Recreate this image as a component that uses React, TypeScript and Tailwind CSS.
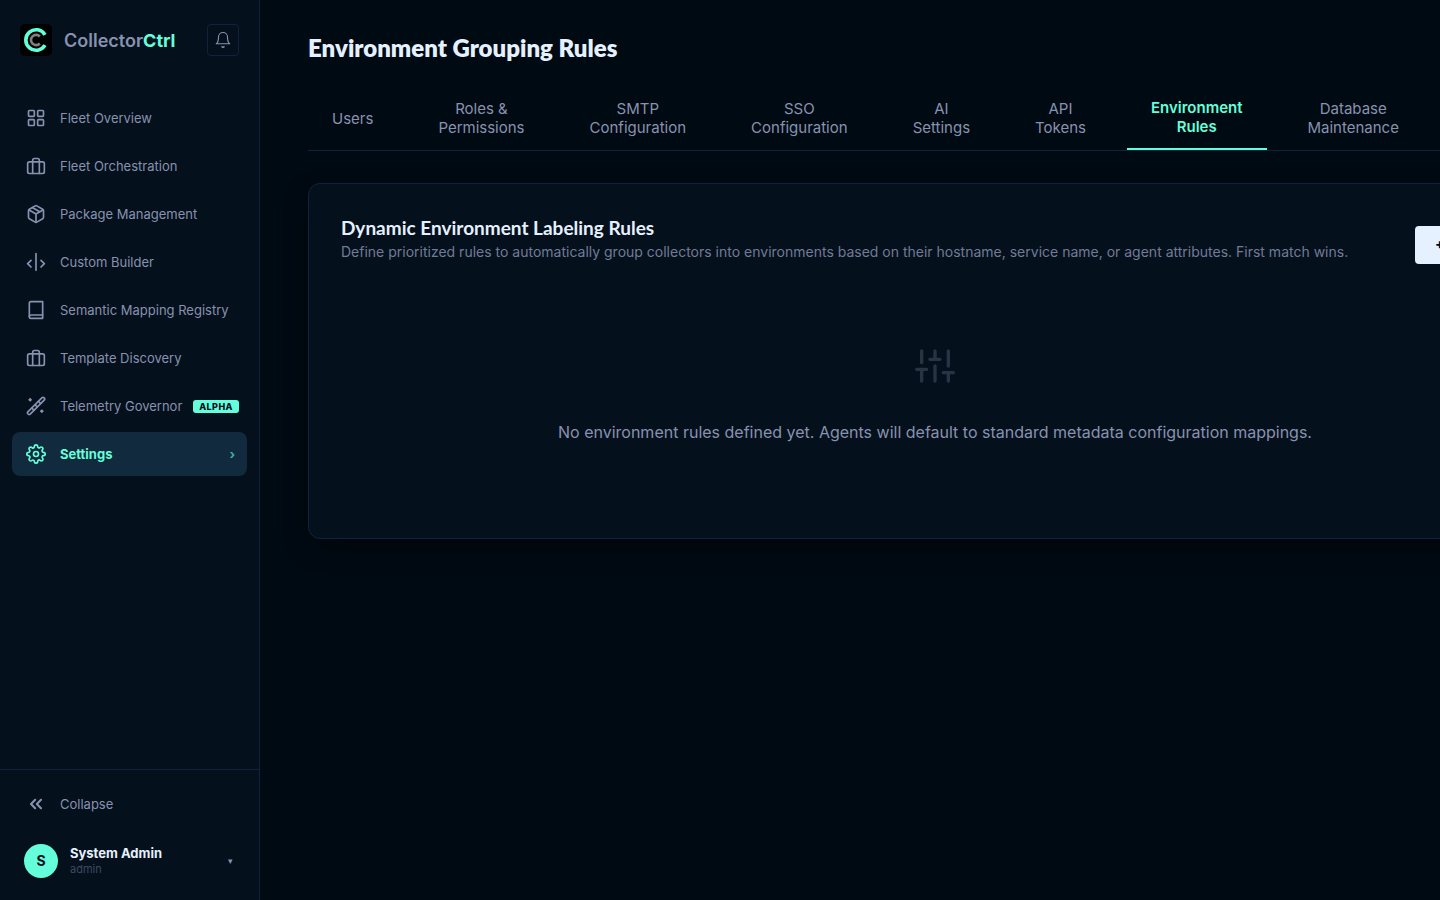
import { FC, ReactNode } from 'react';

interface NavItem {
  label: string;
  icon: ReactNode;
  badge?: string;
  active?: boolean;
}

interface IconProps {
  children: ReactNode;
  className?: string;
  strokeWidth?: number;
}

const Icon: FC<IconProps> = ({ children, className = 'w-5 h-5', strokeWidth = 2 }) => (
  <svg
    viewBox="0 0 24 24"
    fill="none"
    stroke="currentColor"
    strokeWidth={strokeWidth}
    strokeLinecap="round"
    strokeLinejoin="round"
    className={`shrink-0 ${className}`}
    aria-hidden="true"
  >
    {children}
  </svg>
);

const briefcase = (
  <Icon>
    <rect x="2" y="7" width="20" height="14" rx="2" />
    <path d="M16 21V5a2 2 0 0 0-2-2h-4a2 2 0 0 0-2 2v16" />
  </Icon>
);

const navItems: NavItem[] = [
  {
    label: 'Fleet Overview',
    icon: (
      <Icon>
        <rect x="3" y="3" width="7" height="7" rx="1" />
        <rect x="14" y="3" width="7" height="7" rx="1" />
        <rect x="3" y="14" width="7" height="7" rx="1" />
        <rect x="14" y="14" width="7" height="7" rx="1" />
      </Icon>
    ),
  },
  { label: 'Fleet Orchestration', icon: briefcase },
  {
    label: 'Package Management',
    icon: (
      <Icon>
        <path d="M16.5 9.4l-9-5.19" />
        <path d="M21 16V8a2 2 0 0 0-1-1.73l-7-4a2 2 0 0 0-2 0l-7 4A2 2 0 0 0 3 8v8a2 2 0 0 0 1 1.73l7 4a2 2 0 0 0 2 0l7-4A2 2 0 0 0 21 16z" />
        <path d="M3.27 6.96L12 12.01l8.73-5.05M12 22.08V12" />
      </Icon>
    ),
  },
  {
    label: 'Custom Builder',
    icon: (
      <Icon>
        <path d="M12 2v20M18 10l4 4-4 4M6 10l-4 4 4 4" />
      </Icon>
    ),
  },
  {
    label: 'Semantic Mapping Registry',
    icon: (
      <Icon>
        <path d="M4 19.5A2.5 2.5 0 0 1 6.5 18H20" />
        <path d="M6 2h14v20H6a2 2 0 0 1-2-2V4a2 2 0 0 1 2-2z" />
      </Icon>
    ),
  },
  { label: 'Template Discovery', icon: briefcase },
  {
    label: 'Telemetry Governor',
    badge: 'ALPHA',
    icon: (
      <Icon>
        <path d="M21.8 2.2a2 2 0 0 0-2.8 0L2.2 19a2 2 0 0 0 2.8 2.8L21.8 5a2 2 0 0 0 0-2.8z" />
        <path d="M15 6.5L17.5 9M11 10.5l2.5 2.5M7 14.5L9.5 17" />
        <path d="M5 3.8v1.6M4.2 4.6h1.6M19 17.4V19M18.2 18.2h1.6" strokeWidth="2.6" />
      </Icon>
    ),
  },
  {
    label: 'Settings',
    active: true,
    icon: (
      <Icon>
        <circle cx="12" cy="12" r="3" />
        <path d="M19.4 15a1.65 1.65 0 0 0 .33 1.82l.06.06a2 2 0 0 1 0 2.83 2 2 0 0 1-2.83 0l-.06-.06a1.65 1.65 0 0 0-1.82-.33 1.65 1.65 0 0 0-1 1.51V21a2 2 0 0 1-2 2 2 2 0 0 1-2-2v-.09A1.65 1.65 0 0 0 9 19.4a1.65 1.65 0 0 0-1.82.33l-.06.06a2 2 0 0 1-2.83 0 2 2 0 0 1 0-2.83l.06-.06a1.65 1.65 0 0 0 .33-1.82 1.65 1.65 0 0 0-1.51-1H3a2 2 0 0 1-2-2 2 2 0 0 1 2-2h.09A1.65 1.65 0 0 0 4.6 9a1.65 1.65 0 0 0-.33-1.82l-.06-.06a2 2 0 0 1 0-2.83 2 2 0 0 1 2.83 0l.06.06a1.65 1.65 0 0 0 1.82.33H9a1.65 1.65 0 0 0 1-1.51V3a2 2 0 0 1 2-2 2 2 0 0 1 2 2v.09a1.65 1.65 0 0 0 1 1.51 1.65 1.65 0 0 0 1.82-.33l.06-.06a2 2 0 0 1 2.83 0 2 2 0 0 1 0 2.83l-.06.06a1.65 1.65 0 0 0-.33 1.82V9a1.65 1.65 0 0 0 1.51 1H21a2 2 0 0 1 2 2 2 2 0 0 1-2 2h-.09a1.65 1.65 0 0 0-1.51 1z" />
      </Icon>
    ),
  },
];

const tabs = [
  'Users',
  'Roles & Permissions',
  'SMTP Configuration',
  'SSO Configuration',
  'AI Settings',
  'API Tokens',
  'Environment Rules',
  'Database Maintenance',
];

const Logo: FC = () => (
  <svg viewBox="0 0 32 32" fill="none" className="w-8 h-8 shrink-0" aria-hidden="true">
    <rect width="32" height="32" rx="5" fill="#000" />
    <path d="M25 10.8A10.3 10.3 0 1 0 25 21.2" stroke="#64ffda" strokeWidth="3.6" />
    <path d="M19.8 12.5A5.1 5.1 0 1 0 19.8 19.5" stroke="#808080" strokeWidth="2.6" />
  </svg>
);

const Sidebar: FC = () => (
  <aside className="w-[260px] shrink-0 flex flex-col bg-[#04101b] border-r border-[#112240]">
    <div className="flex items-center px-5 pt-6 pb-10">
      <Logo />
      <span className="ml-3 pt-px text-lg font-semibold text-[#8892b0]">
        Collector<span className="font-bold text-[#64ffda]">Ctrl</span>
      </span>
      <button
        aria-label="Notifications"
        className="ml-auto w-8 h-8 flex items-center justify-center rounded border border-[#112240] text-[#8892b0]"
      >
        <Icon className="w-[18px] h-[18px]" strokeWidth={1.5}>
          <path d="M18 8A6 6 0 0 0 6 8c0 7-3 9-3 9h18s-3-2-3-9" />
          <path d="M13.73 21a2 2 0 0 1-3.46 0z" />
        </Icon>
      </button>
    </div>

    <nav className="flex flex-col gap-1 px-3">
      {navItems.map((item) => (
        <a
          key={item.label}
          href="#"
          className={`flex items-center h-11 rounded-lg pl-[14px] pr-2 text-[13px] whitespace-nowrap ${
            item.active ? 'bg-[#112a3e] text-[#64ffda] font-bold' : 'text-[#8892b0]'
          }`}
        >
          {item.icon}
          <span className="ml-[14px] pt-px">{item.label}</span>
          {item.badge && (
            <span className="ml-auto px-[6px] rounded-[3px] bg-[#64ffda] text-[#020c1b] text-[9px] leading-[13px] font-extrabold tracking-wider">
              {item.badge}
            </span>
          )}
          {item.active && <span className="ml-auto mr-1 pt-px opacity-60">›</span>}
        </a>
      ))}
    </nav>

    <div className="mt-auto border-t border-[#112240] px-3 pt-3 pb-[18px]">
      <button className="w-full flex items-center h-11 pl-[14px] text-[13px] text-[#8892b0]">
        <Icon strokeWidth={2.5}>
          <path d="M11 17l-5-5 5-5M18 17l-5-5 5-5" />
        </Icon>
        <span className="ml-[14px] pt-px">Collapse</span>
      </button>
      <button className="w-full flex items-center mt-[14px] px-3 py-1 text-left">
        <span className="w-[34px] h-[34px] rounded-full bg-[#64ffda] text-[#020c1b] text-sm font-bold flex items-center justify-center">
          S
        </span>
        <span className="ml-3 flex flex-col">
          <span className="text-[13px] leading-4 font-bold text-[#e6f1ff]">System Admin</span>
          <span className="text-[11px] leading-4 text-[#3d4a63]">admin</span>
        </span>
        <span className="ml-auto mr-[2px] text-[9px] text-[#8892b0]">▾</span>
      </button>
    </div>
  </aside>
);

const App: FC = () => {
  return (
    <div className="min-h-screen flex bg-[#000a12] font-['Inter',sans-serif] overflow-hidden">
      <Sidebar />

      <main className="flex-1 min-w-0 px-12 py-8">
        <div className="min-w-[1254px]">
          <h1 className="font-['Lato',sans-serif] text-2xl leading-8 font-extrabold text-[#e6f1ff]">
            Environment Grouping Rules
          </h1>

          <div role="tablist" className="mt-[22px] flex gap-[17px] border-b border-[#112240]">
            {tabs.map((tab) => {
              const active = tab === 'Environment Rules';
              return (
                <button
                  key={tab}
                  role="tab"
                  aria-selected={active}
                  className={`w-min box-content px-6 py-3 text-[15px] leading-[19px] text-center ${
                    active
                      ? 'border-b-2 border-[#64ffda] text-[#64ffda] font-semibold'
                      : 'text-[#8892b0]'
                  }`}
                >
                  {tab}
                </button>
              );
            })}
          </div>

          <section className="mt-8 p-8 rounded-xl bg-[#04101b] border border-[#112240] shadow-[0_10px_30px_-10px_rgba(0,0,0,0.7)]">
            <div className="flex items-end justify-between">
              <div>
                <h2 className="font-['Lato',sans-serif] text-[19px] leading-6 font-bold text-[#e6f1ff]">
                  Dynamic Environment Labeling Rules
                </h2>
                <p className="text-sm leading-6 text-[#717b98]">
                  Define prioritized rules to automatically group collectors into environments based
                  on their hostname, service name, or agent attributes. First match wins.
                </p>
              </div>
              <button className="h-[38px] px-5 rounded bg-[#e6f1ff] text-[#020c1b] text-sm font-bold whitespace-nowrap">
                + Add Rule
              </button>
            </div>

            <div className="flex flex-col items-center pt-[82px] pb-[62px] text-[#8892b0]">
              <Icon className="w-10 h-10 text-[#273444]">
                <path d="M4 21v-7M4 10V3M12 21v-9M12 8V3M20 21v-5M20 12V3M1 14h6M9 8h6M17 16h6" />
              </Icon>
              <p className="mt-[34px] text-base">
                No environment rules defined yet. Agents will default to standard metadata
                configuration mappings.
              </p>
            </div>
          </section>
        </div>
      </main>
    </div>
  );
};

export default App;
